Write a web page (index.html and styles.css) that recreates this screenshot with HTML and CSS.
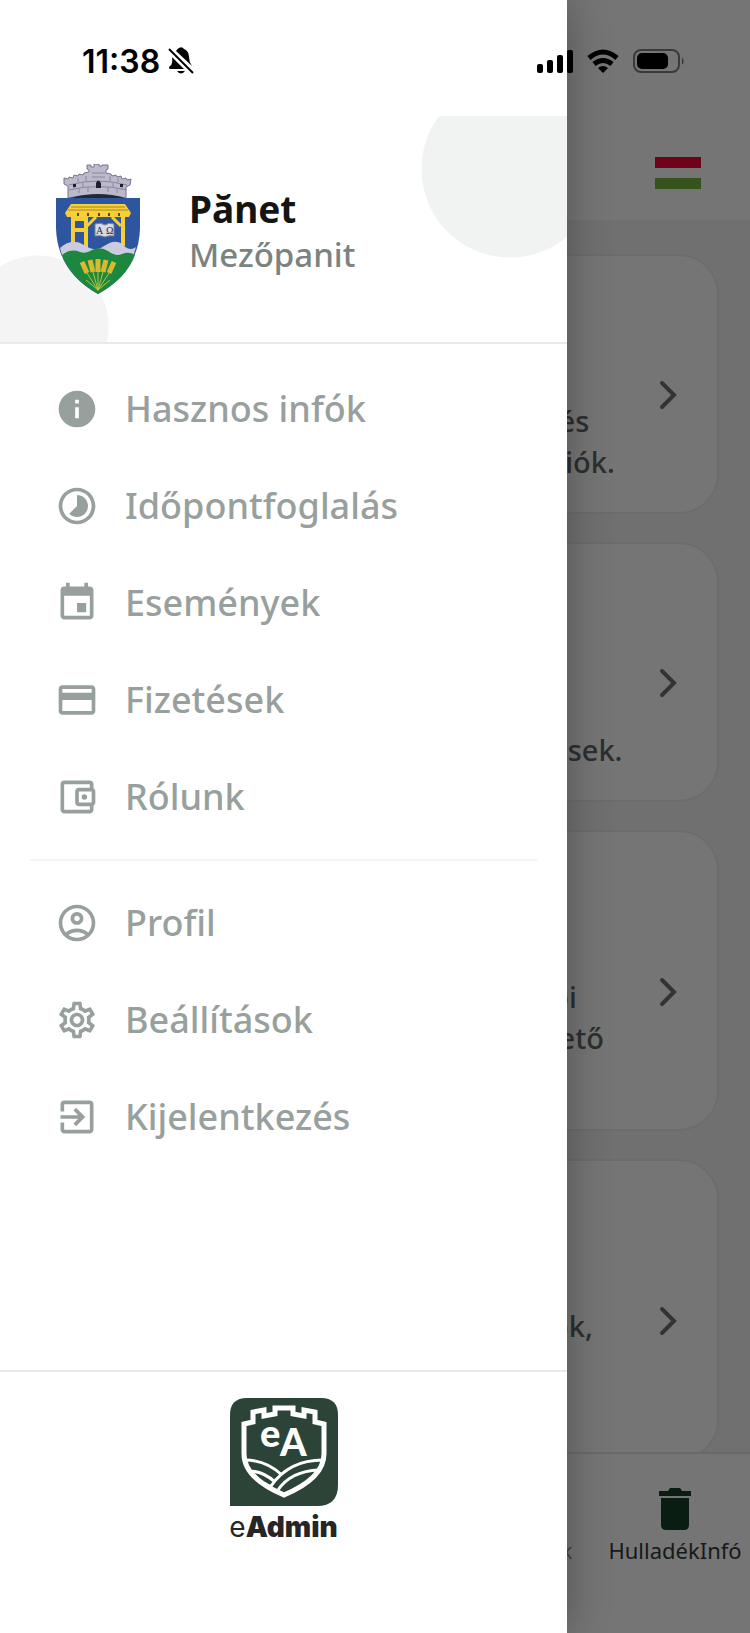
FILE: index.html
```
<!DOCTYPE html>
<html lang="hu">
<head>
  <meta charset="UTF-8">
  <meta name="viewport" content="width=device-width, initial-scale=1.0">
  <title>eAdmin - Mezőpanit</title>
  <link rel="stylesheet" href="styles.css">
</head>
<body>
  <!-- App behind the drawer -->
  <div class="app">
    <header class="app-header">
      <button class="lang" type="button" aria-label="Magyar"></button>
    </header>

    <main class="cards">
      <a class="card" href="#">
        <p class="card-text">&nbsp;és<br>ciók.</p>
        <svg class="chevron" viewBox="0 0 44 44"><path d="M17 10l12 12-12 12"/></svg>
      </a>
      <a class="card" href="#">
        <p class="card-text">ések.</p>
        <svg class="chevron" viewBox="0 0 44 44"><path d="M17 10l12 12-12 12"/></svg>
      </a>
      <a class="card card-tall" href="#">
        <p class="card-text">pi<br>&nbsp;ető<br>&nbsp;</p>
        <svg class="chevron" viewBox="0 0 44 44"><path d="M17 10l12 12-12 12"/></svg>
      </a>
      <a class="card card-tall" href="#">
        <p class="card-text">ok,<br>&nbsp;<br>&nbsp;</p>
        <svg class="chevron" viewBox="0 0 44 44"><path d="M17 10l12 12-12 12"/></svg>
      </a>
    </main>

    <nav class="tabs">
      <a class="tab" href="#">
        <svg class="tab-icon" viewBox="0 0 24 24"><path d="M19 6H5v12h14z"/></svg>
        <span>Fizetések</span>
      </a>
      <a class="tab tab-active" href="#">
        <svg class="tab-icon" viewBox="0 0 56 56"><path d="M14 18h28v27q0 5-5 5H19q-5 0-5-5zM12 11h9l2-3h10l2 3h9v5H12z"/></svg>
        <span>HulladékInfó</span>
      </a>
    </nav>
  </div>

  <div class="scrim"></div>

  <!-- Drawer -->
  <aside class="drawer">
    <header class="drawer-header">
      <svg class="crest" viewBox="0 0 84 130">
        <path fill="#bdb9cc" stroke="#77738a" stroke-width="1" d="M8 14l4 1 1-2 4 1 1-3 4 1 1-2 4 1 1-2 5-1V6l-2-1V1h4v2h3V0h5v2h3V1h6v4l-2 1v3l5 1 1 2 4-1 1 2 4-1 1 3 4-1 1 2 4-1-1 6-4 2v15Q42 27 12 34V22l-4-2z"/>
        <path fill="none" stroke="#8a869b" stroke-width="1" d="M13 21q29-8 58 0M13 26q29-7 58 0M36 9h13M36 13h13M22 14v4M30 12v5M54 12v5M62 14v4M18 20v5M27 19v4M57 19v4M66 20v5M23 25v4M32 23v5M52 23v5M61 25v4"/>
        <path fill="#1d1e2b" d="M40 24v-5q2-5 5 0v5zM17 23v-3h3v3zM64 23v-3h3v3z"/>
        <path fill="#22283a" d="M14 34q28-8 56 0z"/>
        <path fill="#2d55a0" d="M0 34h84v30q-1 43-42 66Q1 107 0 64z"/>
        <path fill="#f5cf35" d="M15 40h54l6 9-2 4H11l-2-4z"/>
        <path fill="none" stroke="#a9872d" stroke-width="1" d="M15 43h54M12 46h60"/>
        <path fill="none" stroke="#f5cf35" stroke-width="4" d="M17 52v30M30 52v32M67 52v30M17 55h14M17 66h14"/>
        <path fill="none" stroke="#f5cf35" stroke-width="3" d="M31 62l9-9M65 62l-9-9"/>
        <path fill="#5b4520" d="M21 49h2v3h-2zM31 49h2v3h-2zM42 49h2v3h-2zM52 49h2v3h-2zM62 49h2v3h-2z"/>
        <path fill="#d9dbe4" stroke="#77809b" stroke-width="1" d="M39 60q6-2 10 1 4-3 9-1v12q-5-1-9 1-4-2-10-1z"/>
        <text class="crest-letters" x="40" y="70">A</text>
        <text class="crest-letters" x="50" y="70">Ω</text>
        <path fill="#cbcbe0" d="M4 84q12-11 24-3t20 1q12-8 19-1t13 2l-3 10q-18 3-36-2T7 94z"/>
        <path fill="#1d8740" d="M6 91q9-7 18-3 6 2 12-2 8-4 16 1 8 6 14 3 7-3 13 1-9 24-37 39Q15 115 6 91z"/>
        <path fill="none" stroke="#d9b92f" stroke-width="5" d="M26 98l5 11M34 96l3 12M42 95v13M50 96l-3 12M58 98l-5 11"/>
        <path fill="none" stroke="#b9c63c" stroke-width="1" d="M31 109l11 17M37 108l5 18M42 108v19M47 108l-5 18M53 109l-11 17M30 116l12 10 12-10"/>
      </svg>
      <div class="place">
        <h1>Pănet</h1>
        <p>Mezőpanit</p>
      </div>
    </header>

    <nav class="menu">
      <ul>
        <li><a href="#">
          <svg class="icon" viewBox="0 0 24 24"><path d="M12 2C6.480 2 2 6.480 2 12s4.480 10 10 10 10-4.480 10-10S17.520 2 12 2zm1 15h-2v-6h2v6zm0-8h-2V7h2v2z"/></svg>
          Hasznos infók</a></li>
        <li><a href="#">
          <svg class="icon" viewBox="0 0 24 24"><path d="M16.240 7.760C15.070 6.590 13.540 6 12 6v6l-4.240 4.240c2.340 2.340 6.140 2.340 8.490 0 2.340-2.340 2.340-6.140-.01-8.480zM12 2C6.480 2 2 6.480 2 12s4.480 10 10 10 10-4.480 10-10S17.520 2 12 2zm0 18c-4.420 0-8-3.580-8-8s3.580-8 8-8 8 3.580 8 8-3.580 8-8 8z"/></svg>
          Időpontfoglalás</a></li>
        <li><a href="#">
          <svg class="icon" viewBox="0 0 24 24"><path d="M17 12h-5v5h5v-5zM16 1v2H8V1H6v2H5c-1.110 0-1.990.9-1.990 2L3 19c0 1.100.89 2 2 2h14c1.100 0 2-.9 2-2V5c0-1.100-.9-2-2-2h-1V1h-2zm3 18H5V8h14v11z"/></svg>
          Események</a></li>
        <li><a href="#">
          <svg class="icon" viewBox="0 0 24 24"><path d="M20 4H4c-1.110 0-1.990.89-1.990 2L2 18c0 1.110.89 2 2 2h16c1.110 0 2-.89 2-2V6c0-1.110-.89-2-2-2zm0 14H4v-6h16v6zm0-10H4V6h16v2z"/></svg>
          Fizetések</a></li>
        <li><a href="#">
          <svg class="icon" viewBox="0 0 24 24"><path d="M21 7.280V5c0-1.100-.9-2-2-2H5c-1.110 0-2 .9-2 2v14c0 1.100.89 2 2 2h14c1.100 0 2-.9 2-2v-2.280c.59-.35 1-.98 1-1.720V9c0-.74-.41-1.370-1-1.720zM20 9v6h-7V9h7zM5 19V5h14v2h-6c-1.100 0-2 .9-2 2v6c0 1.100.9 2 2 2h6v2H5z"/><circle cx="16" cy="12" r="1.500"/></svg>
          Rólunk</a></li>
      </ul>
      <ul>
        <li><a href="#">
          <svg class="icon" viewBox="0 0 24 24"><path d="M12 2C6.480 2 2 6.480 2 12s4.480 10 10 10 10-4.480 10-10S17.520 2 12 2zM7.350 18.500C8.660 17.560 10.260 17 12 17s3.340.56 4.650 1.500C15.340 19.440 13.740 20 12 20s-3.340-.56-4.650-1.500zm10.790-1.380C16.450 15.800 14.320 15 12 15s-4.450.8-6.140 2.120C4.700 15.730 4 13.950 4 12c0-4.420 3.580-8 8-8s8 3.580 8 8c0 1.950-.7 3.730-1.860 5.120zM12 6c-1.930 0-3.500 1.570-3.500 3.500S10.070 13 12 13s3.500-1.570 3.500-3.500S13.930 6 12 6zm0 5c-.83 0-1.500-.67-1.500-1.500S11.170 8 12 8s1.500.67 1.500 1.500S12.830 11 12 11z"/></svg>
          Profil</a></li>
        <li><a href="#">
          <svg class="icon" viewBox="0 0 24 24"><path d="M19.430 12.980c.04-.32.07-.64.07-.98 0-.34-.03-.66-.07-.98l2.110-1.650c.19-.15.24-.42.12-.64l-2-3.460c-.09-.16-.26-.25-.44-.25-.06 0-.12.010-.17.030l-2.490 1c-.52-.4-1.080-.73-1.690-.98l-.38-2.650C14.460 2.180 14.250 2 14 2h-4c-.25 0-.46.18-.49.42l-.38 2.650c-.61.25-1.170.59-1.690.98l-2.490-1c-.06-.02-.12-.03-.18-.03-.17 0-.34.09-.43.25l-2 3.460c-.13.22-.07.49.12.64l2.110 1.650c-.04.32-.07.65-.07.98 0 .33.030.66.070.98l-2.110 1.650c-.19.15-.24.42-.12.64l2 3.460c.09.16.26.25.44.25.06 0 .12-.01.17-.03l2.490-1c.52.4 1.080.73 1.690.98l.38 2.650c.03.24.24.42.49.42h4c.25 0 .46-.18.49-.42l.38-2.650c.61-.25 1.170-.59 1.690-.98l2.490 1c.06.02.12.030.18.030.17 0 .34-.09.430-.25l2-3.460c.12-.22.07-.49-.12-.64l-2.110-1.650zm-1.980-1.710c.04.31.050.52.050.73 0 .21-.02.430-.05.73l-.14 1.130.89.700 1.080.84-.7 1.210-1.270-.51-1.040-.42-.9.680c-.43.32-.84.56-1.250.73l-1.060.43-.16 1.130-.2 1.350h-1.400l-.19-1.350-.16-1.130-1.060-.43c-.43-.18-.83-.41-1.230-.71l-.91-.7-1.060.43-1.270.51-.7-1.210 1.080-.84.89-.7-.14-1.130c-.03-.31-.05-.54-.05-.74s.02-.43.050-.73l.14-1.130-.89-.7-1.080-.84.7-1.210 1.270.51 1.040.42.9-.68c.43-.32.84-.56 1.250-.73l1.060-.43.16-1.130.2-1.350h1.390l.19 1.350.16 1.130 1.060.43c.43.180.83.410 1.230.71l.91.7 1.060-.43 1.270-.51.7 1.210-1.070.85-.89.7.14 1.130zM12 8c-2.210 0-4 1.790-4 4s1.790 4 4 4 4-1.790 4-4-1.790-4-4-4zm0 6c-1.100 0-2-.9-2-2s.9-2 2-2 2 .9 2 2-.9 2-2 2z"/></svg>
          Beállítások</a></li>
        <li><a href="#">
          <svg class="icon" viewBox="0 0 24 24"><path d="M10.090 15.590L11.500 17l5-5-5-5-1.410 1.410L12.670 11H3v2h9.670l-2.580 2.590zM19 3H5c-1.110 0-2 .9-2 2v4h2V5h14v14H5v-4H3v4c0 1.100.89 2 2 2h14c1.100 0 2-.9 2-2V5c0-1.100-.9-2-2-2z"/></svg>
          Kijelentkezés</a></li>
      </ul>
    </nav>

    <footer class="drawer-footer">
      <svg class="logo" viewBox="0 0 108 108">
        <path fill="#2c4437" d="M17 0h74q17 0 17 17v70q0 21-21 21H0V17Q0 0 17 0z"/>
        <g fill="none" stroke="#fff">
          <path stroke-width="5" d="M14 26l9-2V14l11-2v6l11-2v-6h18v6l11 2v-6l11 2v10l9 2v30q0 24-40 41Q14 80 14 56z"/>
          <path stroke-width="3" d="M15 62q21 0 37 15M19 73q14 0 26 11M93 62q-34 0-52 26M89 72q-28 1-41 20M29 84q6 1 12 5"/>
        </g>
        <text class="logo-letters" x="30" y="49">e<tspan dy="9">A</tspan></text>
      </svg>
      <p class="brand">e<b>Admin</b></p>
    </footer>
  </aside>

  <!-- Phone status bar -->
  <div class="status">
    <span class="time">11:38</span>
    <svg class="bell" viewBox="0 0 26 28">
      <path d="M8 4q1-2 3-3 3-2 5 1 5 2 5 8 0 5 3 9zM4 10l12 12H2q-2-1 0-3 3-2 2-9zM9 24h8q-4 5-8 0z"/>
      <path fill="none" stroke="#000" stroke-width="2" d="M1 2l24 24"/>
    </svg>
    <svg class="signal" viewBox="0 0 36 24">
      <rect x="0" y="15" width="6" height="9" rx="2"/>
      <rect x="10" y="11" width="6" height="13" rx="2"/>
      <rect x="20" y="6" width="6" height="18" rx="2"/>
      <rect x="30" y="1" width="6" height="23" rx="2"/>
    </svg>
    <svg class="wifi" viewBox="0 0 32 24">
      <path fill="none" stroke="#000" stroke-width="5" d="M2 9q14-12 28 0M7 15q9-7 18 0"/>
      <path d="M11 19q5-4 10 0l-5 5z"/>
    </svg>
    <svg class="battery" viewBox="0 0 52 24">
      <rect x="1" y="1" width="45" height="22" rx="7" fill="none" stroke="#000" stroke-opacity=".5" stroke-width="2"/>
      <rect x="4" y="4" width="31" height="16" rx="5"/>
      <path fill-opacity=".6" d="M49 8q3 4 0 8z"/>
    </svg>
  </div>
</body>
</html>
```
FILE: styles.css
```
:root {
  --text-muted: #98a09d;
  --line: #e9eaea;
  --font-family: "Noto Sans", "Open Sans", sans-serif;
}

* {
  box-sizing: border-box;
}

body {
  position: relative;
  margin: 0;
  height: 100vh;
  overflow: hidden;
  font-family: var(--font-family);
  background-color: #fff;
}

h1, p, ul {
  margin: 0;
  padding: 0;
}

ul {
  list-style: none;
}

a {
  color: inherit;
  text-decoration: none;
}

svg {
  display: block;
  flex: none;
}

/* App */
.app {
  display: flex;
  flex-direction: column;
  height: 100%;
  background-color: #f4f4f4;
}

.app-header {
  display: flex;
  flex: none;
  justify-content: flex-end;
  height: 220px;
  padding: 157px 49px 0 0;
  background-color: #fff;
}

.lang {
  width: 46px;
  height: 32px;
  padding: 0;
  border: 0;
  background: linear-gradient(#f00838 0 11px, #fff 11px 21px, #75b741 21px);
}

.cards {
  display: flex;
  flex: 1;
  flex-direction: column;
  gap: 28px;
  min-height: 0;
  padding: 34px 31px 0;
  overflow: hidden;
}

.card {
  display: flex;
  flex: none;
  align-items: center;
  justify-content: flex-end;
  min-height: 260px;
  padding: 22px 28px 0 0;
  border: 2px solid #ececec;
  border-radius: 40px;
  background-color: #fff;
  color: #616866;
}

.card-tall {
  min-height: 301px;
}

.card-text {
  align-self: flex-end;
  width: 94px;
  padding-bottom: 30px;
  font-size: 29px;
  font-weight: 500;
  line-height: 41px;
  white-space: nowrap;
}

.chevron {
  width: 44px;
  height: 44px;
  fill: none;
  stroke: #6b726f;
  stroke-width: 4;
  stroke-linecap: round;
}

/* Bottom tabs */
.tabs {
  display: flex;
  flex: none;
  justify-content: flex-end;
  height: 181px;
  padding-top: 26px;
  border-top: 2px solid #e4e4e4;
  background-color: #fff;
}

.tab {
  display: flex;
  flex-direction: column;
  align-items: center;
  width: 20%;
  color: #999;
  font-size: 22px;
  line-height: 28px;
}

.tab-active {
  color: #333a37;
}

.tab-icon {
  width: 56px;
  height: 56px;
  fill: currentColor;
}

.tab-active .tab-icon {
  fill: #14402a;
}

.scrim {
  position: absolute;
  inset: 0;
  background-color: rgba(0, 0, 0, 0.54);
}

/* Drawer */
.drawer {
  position: absolute;
  inset: 0 auto 0 0;
  display: flex;
  flex-direction: column;
  width: 75.6%;
  padding-top: 116px;
  background-color: #fff;
  box-shadow: 0 0 40px rgba(0, 0, 0, 0.3);
}

.drawer-header {
  display: flex;
  align-items: center;
  gap: 49px;
  height: 228px;
  padding: 0 56px;
  border-bottom: 2px solid var(--line);
  background:
    radial-gradient(circle at calc(100% - 57px) 53px, #f0f3f2 88px, transparent 89px),
    radial-gradient(circle at 38px 210px, #f4f4f4 70px, transparent 71px);
}

.crest {
  width: 84px;
  height: 130px;
}

.crest-letters {
  fill: #22283a;
  font-family: "Liberation Serif", serif;
  font-size: 10px;
}

.place {
  padding-top: 6px;
}

.place h1 {
  color: #141414;
  font-size: 37px;
  font-weight: 700;
  line-height: 46px;
}

.place p {
  color: #7b8381;
  font-size: 33px;
  font-weight: 500;
  line-height: 46px;
}

/* Menu */
.menu {
  flex: 1;
  padding: 16px 30px;
}

.menu ul + ul {
  margin-top: 14px;
  padding-top: 13px;
  border-top: 2px solid #f3f4f4;
}

.menu a {
  display: flex;
  align-items: center;
  gap: 26px;
  height: 97px;
  padding-left: 25px;
  color: var(--text-muted);
  font-size: 36px;
  font-weight: 500;
}

.icon {
  width: 44px;
  height: 44px;
  fill: var(--text-muted);
}

/* Footer logo */
.drawer-footer {
  display: flex;
  flex-direction: column;
  align-items: center;
  height: 263px;
  padding-top: 26px;
  border-top: 2px solid var(--line);
}

.logo {
  width: 108px;
  height: 108px;
}

.logo-letters {
  fill: #fff;
  font-family: Lato, sans-serif;
  font-size: 38px;
  font-weight: 900;
}

.brand {
  color: #262626;
  font-family: Inter, sans-serif;
  font-size: 28px;
  line-height: 42px;
}

.brand b {
  font-weight: 900;
}

/* Status bar */
.status {
  position: absolute;
  inset: 0 0 auto 0;
  display: flex;
  align-items: center;
  height: 122px;
  padding: 0 65px 0 82px;
}

.time {
  font-family: Inter, sans-serif;
  font-size: 32px;
  font-weight: 600;
}

.bell {
  width: 26px;
  height: 28px;
  margin-left: 8px;
}

.signal {
  width: 36px;
  height: 24px;
  margin-left: auto;
}

.wifi {
  width: 32px;
  height: 24px;
  margin: 0 14px;
}

.battery {
  width: 52px;
  height: 24px;
}
```
